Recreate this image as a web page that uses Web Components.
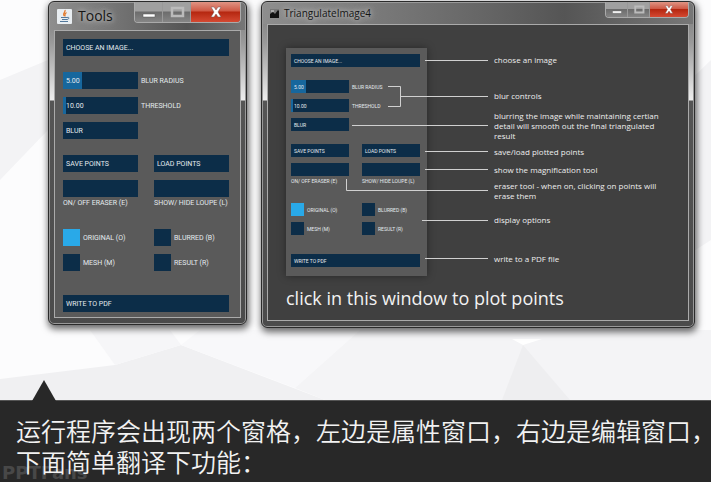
<!DOCTYPE html>
<html lang="en">
<head>
<meta charset="utf-8">
<title>TriangulateImage tools</title>
<style>
  body { margin: 0; min-height: 100vh; background: #fcfcfd; font-family: "Open Sans", "Noto Sans", sans-serif; }
</style>
</head>
<body>
<guide-page></guide-page>

<template id="t-window">
  <style>
    :host { display: flex; flex-direction: column; box-sizing: border-box; min-width: 0; padding: 0 5px 6px; border: 1px solid #2b2b2b; border-radius: 6px;
      background: linear-gradient(90deg, #8e8e8e 0, #6b6b6b 45%, #555 70%, #777 100%) top / 100% var(--bar) no-repeat,
        linear-gradient(#777 0, #999 40px, #eee 98px, #555 99px, #4b4b4b 100%);
      box-shadow: inset 0 0 0 1px #999, 1px 3px 7px 1px #0009; }
    header { display: flex; align-items: center; height: var(--bar); gap: var(--title-gap); padding-left: 3px; box-sizing: border-box; }
    h2 { margin: 0; flex: 1; font-weight: 400; font-size: var(--title); line-height: 20px; color: #151515; text-shadow: 0 0 5px #ccc, 0 0 8px #bbb; white-space: nowrap; }
    .buttons { display: flex; align-self: flex-start; height: var(--btn); border: 1px solid #aaa; border-top: 0; border-radius: 0 0 4px 4px; box-sizing: border-box; overflow: hidden; }
    button { display: grid; place-items: center; margin: 0; padding: 0; border: 0; border-right: 1px solid #999; background: linear-gradient(#a0a0a0 0 45%, #6c6c6c 50%, #858585); width: var(--bw); }
    button.close { border: 0; width: var(--cw); background: linear-gradient(#df9484 0, #cf5945 45%, #b52710 50%, #d44932); }
    svg { height: 60%; width: 16px; }
    main { border: 1px solid #aaa; background: var(--client); flex: 1; position: relative; }
  </style>
  <header>
    <slot name="icon"></slot><h2></h2>
    <div class="buttons">
      <button aria-label="Minimize"><svg viewBox="0 0 16 12"><path d="M2 8h12v3H2z" fill="#fff" stroke="#555" stroke-width=".5"/></svg></button>
      <button aria-label="Maximize"><svg viewBox="0 0 16 12"><path d="M3 2h11v8H3z" fill="none" stroke="#bbb" stroke-width="2.5"/></svg></button>
      <button class="close" aria-label="Close"><svg viewBox="0 0 16 12"><path d="M3 1h3l2 3 2-3h3L10 6l3 5h-3L8 8l-2 3H3l3-5z" fill="#fff" stroke="#755" stroke-width=".5"/></svg></button>
    </div>
  </header>
  <main><slot></slot></main>
</template>

<template id="t-panel">
  <style>
    :host { display: block; box-sizing: border-box; background: #5a5a5a; padding: var(--pad); color: #e4eaee; font: var(--font); }
    form { display: flex; flex-direction: column; gap: var(--sec); margin: 0; }
    .grid { display: grid; grid-template-columns: repeat(2, minmax(0, 1fr)); gap: var(--gap) var(--sec); }
    button { display: block; height: var(--h); width: 100%; margin: 0; padding: 0 3px; border: 0; background: #0c2d48; color: inherit; font: inherit; text-align: left; white-space: nowrap; }
    .slider { display: grid; grid-template-columns: subgrid; grid-column: 1 / -1; align-items: center; column-gap: var(--sec); }
    .slider label { margin-left: calc(3px - var(--sec)); }
    .track { display: grid; align-items: center; }
    .track > * { grid-area: 1 / 1; }
    output { padding-left: 3px; pointer-events: none; z-index: 1; }
    input { appearance: none; margin: 0; border: 0; border-radius: 0; background: #0c2d48; height: var(--h); display: block; }
    input[type=range] { width: 100%; background: linear-gradient(90deg, #17679d var(--fill), #0c2d48 0); }
    input[type=range]::-webkit-slider-thumb { appearance: none; width: 1px; height: 1px; opacity: 0; }
    input[type=radio] { width: var(--h); flex: none; }
    input[type=radio]:checked { background: #29a9e8; }
    .switch input { width: 100%; }
    .switch, label { white-space: nowrap; }
    .switch label { display: block; line-height: var(--label); }
    .modes { margin: 4px 0 var(--end); }
    .modes label { display: flex; align-items: center; gap: 3px; }
  </style>
  <form onsubmit="return false">
    <button>CHOOSE AN IMAGE...</button>
    <div class="grid">
      <div class="slider"><div class="track"><input id="r" type="range" max="20" value="5" style="--fill:25%"><output for="r">5.00</output></div><label for="r">BLUR RADIUS</label></div>
      <div class="slider"><div class="track"><input id="t" type="range" max="255" value="10" style="--fill:4%"><output for="t">10.00</output></div><label for="t">THRESHOLD</label></div>
      <button>BLUR</button>
    </div>
    <div class="grid">
      <button>SAVE POINTS</button><button>LOAD POINTS</button>
      <div class="switch"><input id="e" type="checkbox"><label for="e">ON/ OFF ERASER (E)</label></div>
      <div class="switch"><input id="l" type="checkbox"><label for="l">SHOW/ HIDE LOUPE (L)</label></div>
    </div>
    <div class="grid modes">
      <label><input type="radio" name="m" checked>ORIGINAL (O)</label>
      <label><input type="radio" name="m">BLURRED (B)</label>
      <label><input type="radio" name="m">MESH (M)</label>
      <label><input type="radio" name="m">RESULT (R)</label>
    </div>
    <button>WRITE TO PDF</button>
  </form>
</template>

<template id="t-note">
  <style>
    :host { position: absolute; left: 226px; transform: translateY(-50%); font: 8px/10px "Open Sans", sans-serif; color: #eee; white-space: nowrap; }
  </style>
  <slot></slot>
</template>

<template id="t-caption">
  <style>
    :host { display: block; position: relative; background: #282828; border-top: 1px solid #555; color: #f2f2f2; padding: 14px 0 5px 16px; }
    :host::before { content: ""; position: absolute; left: 32px; bottom: 100%; width: 24px; height: 21px; background: #282828; clip-path: polygon(50% 0, 100% 100%, 0 100%); }
    p { position: relative; margin: 0; font: 25px/31px "Noto Sans CJK SC", sans-serif; font-weight: 350; white-space: nowrap; }
    .mark { position: absolute; left: 2px; bottom: 0; font: bold 18px/18px "DejaVu Sans", sans-serif; color: #484848; }
  </style>
  <span class="mark">PPTFans</span>
  <p lang="zh-CN"><slot></slot></p>
</template>

<template id="t-page">
  <style>
    :host { display: flex; flex-direction: column; min-height: 100vh; }
    .stage { flex: 1; position: relative; display: flex; align-items: flex-start; gap: 14px; padding: 1px 16px 72px 48px; overflow: hidden; }
    .bg { position: absolute; left: 0; top: 0; width: 100%; height: 100%; }
    app-window { position: relative; }
    .tools { --bar: 28px; --title: 14px; --title-gap: 6px; --btn: 21px; --bw: 28px; --cw: 49px; --client: #5a5a5a; flex: 0 0 199px; }
    .tools tool-panel { --h: 17px; --gap: 8px; --sec: 16px; --label: 12px; --end: 8px; --pad: 8px 11px 5px 8px; --font: 7px/10px "Roboto", sans-serif; }
    .editor { --bar: 22px; --title: 10px; --title-gap: 5px; --btn: 16px; --bw: 22px; --cw: 38px; --client: #404040; flex: 1; }
    .canvas { position: relative; padding: 23px 18px 10px; }
    .canvas tool-panel { --h: 13px; --gap: 6px; --sec: 13px; --label: 10px; --end: 6px; --pad: 6px 7px 9px 5px; --font: 5px/8px "Roboto", sans-serif; width: 141px; box-shadow: 0 0 8px #0006; }
    .lines { position: absolute; left: 0; top: 0; width: 240px; height: 250px; }
    h1 { margin: 10px 0 0; font: 18px/24px "Open Sans", sans-serif; color: #f2f2f2; white-space: nowrap; }
  </style>
  <div class="stage">
    <svg class="bg" viewBox="0 0 711 400" preserveAspectRatio="none" aria-hidden="true">
      <path d="M0 400V379L115 365L181 345L325 400z" fill="#f0f0f2"/>
      <path d="M115 365L90 330H170L181 345z" fill="#f6f6f8"/>
      <path d="M181 345L200 330H360L295 388z" fill="#f8f8fa"/>
      <path d="M295 388L360 330H711V400H325z" fill="#f4f4f6"/>
      <path d="M502 400L523 345L570 400z" fill="#eeeef0"/>
      <path d="M0 80L48 60V130L0 180zM711 60L680 90V260L711 240z" fill="#f3f3f5"/>
      <path d="M512 339h30l-19 6z" fill="#fff"/>
    </svg>
    <app-window class="tools" heading="Tools">
      <svg slot="icon" width="15" height="15" viewBox="0 0 15 15" aria-hidden="true"><rect width="15" height="15" rx="1" fill="#e8edf1"/><path d="M8 1C9 3 5 4 7 7M9.500 3.500C7 5 8 6 8 7.500" stroke="#e27a2d" stroke-width="1.300" fill="none"/><path d="M4 8.500h6M5 10.500h5M3 12.500h8M10 8.500c3-1 2 2 0 2" stroke="#52789b" fill="none"/></svg>
      <tool-panel></tool-panel>
    </app-window>
    <app-window class="editor" heading="TriangulateImage4">
      <svg slot="icon" width="9" height="9" viewBox="0 0 9 9" aria-hidden="true"><rect width="9" height="9" fill="#777"/><path d="M0 9V5l3-2 2 2 3-4 1 1v7z" fill="#111"/><path d="M1 2h3" stroke="#ddd"/></svg>
      <div class="canvas">
        <tool-panel></tool-panel>
        <h1>click in this window to plot points</h1>
        <svg class="lines" viewBox="0 0 240 250" fill="none" stroke="#d0d0d0" aria-hidden="true"><path d="M157 35.500H220M120 61.500h12.500v20H120M132.500 71.500H220M84 100.500H220M157 126.500H220M157 144.500H220M78.500 154v11.500H220M154 195.500H220M157 233.500H220"/></svg>
        <call-note style="top:35px">choose an image</call-note>
        <call-note style="top:71px">blur controls</call-note>
        <call-note style="top:101px">blurring the image while maintaining certian<br>detail will smooth out the final triangulated<br>result</call-note>
        <call-note style="top:127px">save/load plotted points</call-note>
        <call-note style="top:145px">show the magnification tool</call-note>
        <call-note style="top:166px">eraser tool - when on, clicking on points will<br>erase them</call-note>
        <call-note style="top:195px">display options</call-note>
        <call-note style="top:234px">write to a PDF file</call-note>
      </div>
    </app-window>
  </div>
  <caption-bar>运行程序会出现两个窗格，左边是属性窗口，右边是编辑窗口<span style="font-feature-settings:'halt'">，</span><br>下面简单翻译下功能：</caption-bar>
</template>

<script>
  class Base extends HTMLElement {
    constructor() {
      super();
      this.attachShadow({ mode: "open" }).append(document.getElementById(this.constructor.tpl).content.cloneNode(true));
    }
  }
  customElements.define("app-window", class extends Base {
    static tpl = "t-window";
    connectedCallback() { this.shadowRoot.querySelector("h2").textContent = this.getAttribute("heading"); }
  });
  customElements.define("tool-panel", class extends Base { static tpl = "t-panel"; });
  customElements.define("call-note", class extends Base { static tpl = "t-note"; });
  customElements.define("caption-bar", class extends Base { static tpl = "t-caption"; });
  customElements.define("guide-page", class extends Base { static tpl = "t-page"; });
</script>
</body>
</html>
